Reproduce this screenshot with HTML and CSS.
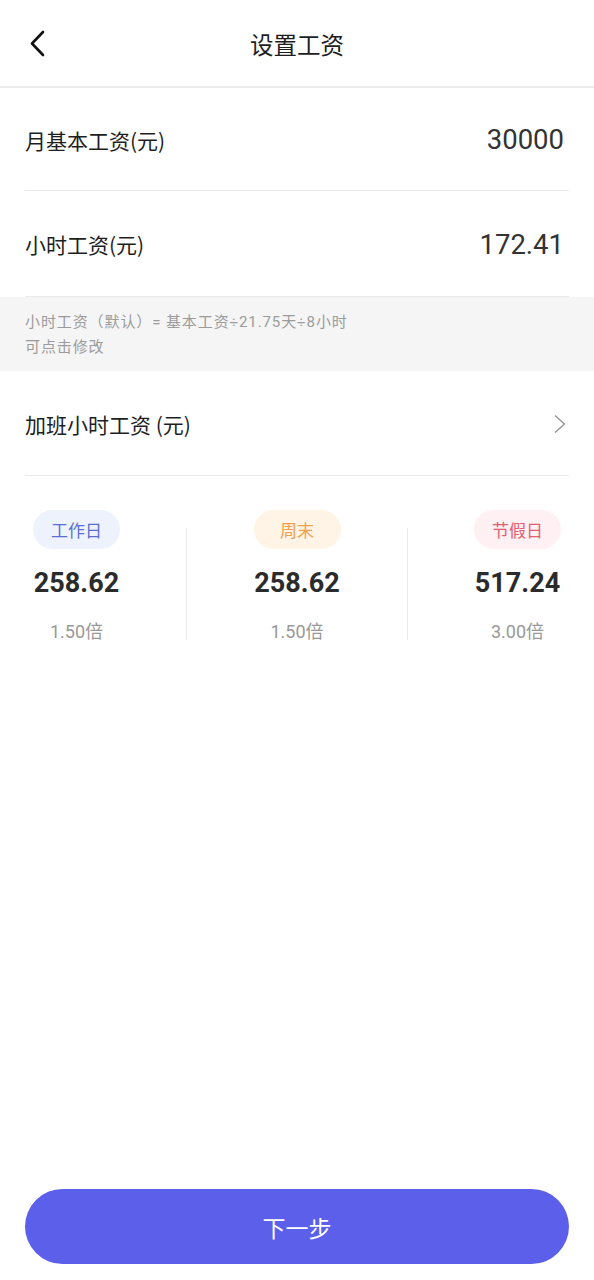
FILE: index.html
```html
<!DOCTYPE html>
<html lang="zh-CN">
<head>
<meta charset="utf-8">
<title>设置工资</title>
<link rel="stylesheet" href="styles.css">
</head>
<body>
<div class="page">
  <header class="header">
    <div class="back">
      <svg width="20" height="30" viewBox="0 0 20 30"><polyline points="15,3 4,14.5 15,26" fill="none" stroke="#111" stroke-width="2.6" stroke-linecap="round" stroke-linejoin="round"/></svg>
    </div>
    <h1 class="title">设置工资</h1>
    <div></div>
  </header>

  <div class="row row-first">
    <span class="label">月基本工资(元)</span>
    <span class="value">30000</span>
  </div>
  <div class="row row-second">
    <span class="label">小时工资(元)</span>
    <span class="value">172.41</span>
  </div>

  <div class="note">
    <p>小时工资（默认）= 基本工资÷21.75天÷8小时</p>
    <p>可点击修改</p>
  </div>

  <div class="row">
    <span class="label">加班小时工资 (元)</span>
    <svg class="chev" width="14" height="20" viewBox="0 0 14 20"><polyline points="2,1.5 11.5,10 2,18.5" fill="none" stroke="#9a9a9a" stroke-width="1.6" stroke-linejoin="round"/></svg>
  </div>

  <div class="rates">
    <div class="rate">
      <span class="badge badge-blue">工作日</span>
      <span class="amount">258.62</span>
      <span class="times">1.50倍</span>
    </div>
    <div class="vline"></div>
    <div class="rate">
      <span class="badge badge-orange">周末</span>
      <span class="amount">258.62</span>
      <span class="times">1.50倍</span>
    </div>
    <div class="vline"></div>
    <div class="rate">
      <span class="badge badge-pink">节假日</span>
      <span class="amount">517.24</span>
      <span class="times">3.00倍</span>
    </div>
  </div>

  <button class="next">下一步</button>
</div>
</body>
</html>
```

FILE: styles.css
```css
* { box-sizing: border-box; }
html, body { margin: 0; padding: 0; background: #fff; }
body {
  font-family: Roboto, "Noto Sans CJK SC", sans-serif;
  color: #222;
}
.page {
  min-height: 1280px;
  display: flex;
  flex-direction: column;
}
.header {
  height: 88px;
  border-bottom: 2px solid #ececec;
  display: grid;
  grid-template-columns: 1fr auto 1fr;
  align-items: center;
  padding: 2px 25px 0;
}
.back { display: flex; align-items: center; padding-left: 3px; }
.back svg { display: block; }
.title {
  margin: 0;
  font-size: 23.5px;
  font-weight: 400;
  color: #1e1e1e;
  font-family: "Noto Sans CJK SC", sans-serif;
}
.row {
  height: 105px;
  margin: 0 25px;
  border-bottom: 1px solid #eaeaea;
  display: flex;
  align-items: center;
  justify-content: space-between;
  padding-top: 1px;
}
.row-first { height: 103px; }
.row-second { height: 106px; }
.label {
  font-size: 21px;
  color: #1e1e1e;
  font-family: "Noto Sans CJK SC", sans-serif;
}
.value {
  font-size: 27.5px;
  color: #333;
  padding-right: 5px;
  font-family: Roboto, sans-serif;
}
.chev { margin-right: 2px; margin-top: 0; }
.note {
  background: #f5f5f5;
  height: 74px;
  padding: 13px 25px 0;
}
.note p {
  margin: 0;
  font-size: 15px;
  letter-spacing: 0.9px;
  line-height: 25px;
  color: #9b9b9b;
}
.rates {
  display: flex;
  justify-content: space-between;
  align-items: flex-start;
  padding: 34px 33px 0;
}
.rate {
  width: 87px;
  display: flex;
  flex-direction: column;
  align-items: center;
}
.badge {
  width: 87px;
  height: 39px;
  border-radius: 20px;
  display: flex;
  align-items: center;
  justify-content: center;
  font-size: 17px;
  font-family: "Noto Sans CJK SC", sans-serif;
}
.badge-blue { background: #eef2fd; color: #5b6fd2; }
.badge-orange { background: #fff4e5; color: #f0a04c; }
.badge-pink { background: #fff0f3; color: #e26171; }
.amount {
  margin-top: 17px;
  font-size: 27px;
  line-height: 34px;
  font-weight: 700;
  color: #2b2b2b;
  white-space: nowrap;
}
.times {
  margin-top: 20px;
  font-size: 18px;
  line-height: 24px;
  color: #999;
  white-space: nowrap;
}
.vline {
  width: 1px;
  height: 112px;
  margin-top: 18px;
  background: #ebebeb;
}
.next {
  margin: auto 25px 16px;
  height: 75px;
  border: none;
  border-radius: 38px;
  background: #5c5fea;
  color: #fff;
  font-size: 23px;
  font-family: "Noto Sans CJK SC", sans-serif;
  padding: 0;
}
```
